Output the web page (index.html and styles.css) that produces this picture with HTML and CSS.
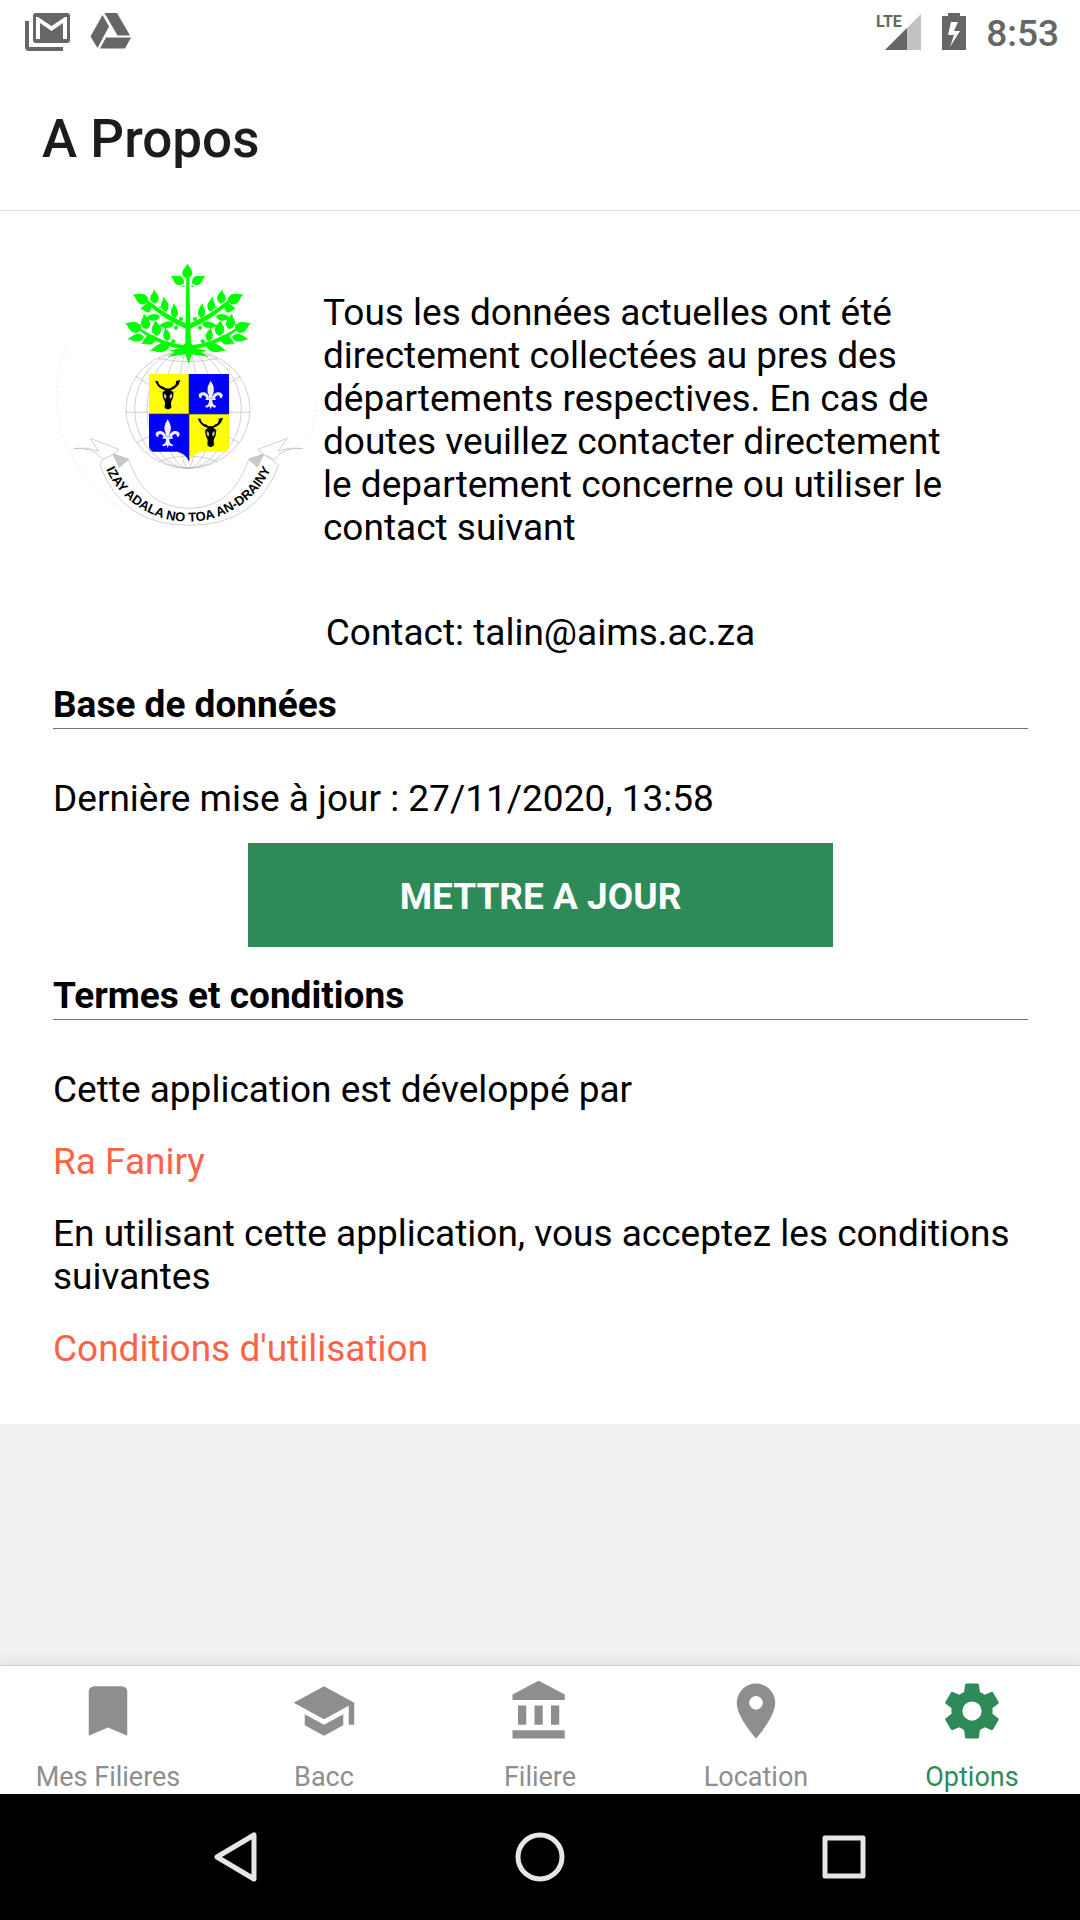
FILE: index.html
```html
<!DOCTYPE html>
<html lang="fr">
<head>
<meta charset="utf-8">
<meta name="viewport" content="width=device-width, initial-scale=1">
<title>A Propos</title>
<link rel="stylesheet" href="styles.css">
</head>
<body>
<div class="status">
  <div class="status-group">
    <svg width="46" height="40" viewBox="0 0 46 40" aria-hidden="true">
      <path fill="#666" d="M0 9h4v26h34v4H4q-4 0-4-4z"/>
      <path fill="#666" fill-rule="evenodd" d="M11 1h31q3 0 3 3v24q0 3-3 3H11q-3 0-3-3V4q0-3 3-3zM11 27h4V11l11.500 8L38 11v16h4V5h-2L26.500 14 13 5h-2z"/>
    </svg>
    <svg width="42" height="40" viewBox="0 0 42 40" aria-hidden="true">
      <path fill="#666" d="M14.500 1h12.500l13 22.500H27.500zM12.500 3l6.500 11.500L7.500 36 .5 24.500zM16 25.500h25L35 36.500H10z"/>
    </svg>
  </div>
  <div class="status-group status-right">
    <svg class="signal" width="46" height="50" viewBox="0 -6 46 50" aria-label="LTE">
      <path fill="#c2c2c2" d="M45 1v36H9z"/>
      <path fill="#666" d="M31 15v22H9z"/>
      <text class="lte" x="0" y="14">LTE</text>
    </svg>
    <svg width="24" height="38" viewBox="0 0 24 38" aria-hidden="true">
      <path fill="#666" fill-rule="evenodd" d="M6 0h12v3h6v34H0V3h6zM9 9L6 22h6L8 34l10-16h-6l4-9z"/>
    </svg>
    <time class="clock">8:53</time>
  </div>
</div>

<header class="header"><h1 class="title">A Propos</h1></header>

<main class="main">
  <div class="content">
    <div class="intro">
      <svg class="logo" viewBox="39 42 810 810" role="img" aria-label="Izay adala no toa an-drainy">
        <defs>
          <path id="leaf" d="M0 0C-20 -8 -19 -26 -5 -39L0 -50C4 -40 19 -27 14 -13Q10 -3 0 0Z"/>
          <path id="motto" d="M172 542A273 273 0 0 0 718 542"/>
          <g id="branch">
            <use href="#leaf" transform="translate(432 100) rotate(-61) scale(.9)"/>
            <use href="#leaf" transform="translate(324 156) rotate(-63) scale(1.02)"/>
            <use href="#leaf" transform="translate(345 161) rotate(-4) scale(.85)"/>
            <use href="#leaf" transform="translate(336 172) rotate(-98) scale(.88 .7)"/>
            <use href="#leaf" transform="translate(377 185) rotate(-8) scale(.75 .92)"/>
            <use href="#leaf" transform="translate(405 204) rotate(-5) scale(.7 .9)"/>
            <use href="#leaf" transform="translate(360 200) rotate(-96) scale(.65 .98)"/>
            <use href="#leaf" transform="translate(402 222) rotate(-97) scale(.65 .98)"/>
            <use href="#leaf" transform="translate(303 240) rotate(-67) scale(1.04)"/>
            <use href="#leaf" transform="translate(320 238) rotate(-10) scale(.9 .96)"/>
            <use href="#leaf" transform="translate(312 260) rotate(-99) scale(.75 1)"/>
            <use href="#leaf" transform="translate(352 257) rotate(-8) scale(.95)"/>
            <use href="#leaf" transform="translate(346 260) rotate(-118) scale(.95)"/>
            <use href="#leaf" transform="translate(384 273) rotate(-12) scale(.7 .85)"/>
            <use href="#leaf" transform="translate(388 288) rotate(-103) scale(.85 1.200)"/>
            <path d="M438 220Q380 195 326 152L320 158Q370 208 438 236zM440 286Q370 280 302 236L300 242Q370 296 440 296z"/>
            <circle cx="423" cy="207" r="6"/><circle cx="408" cy="233" r="6"/><circle cx="400" cy="274" r="6"/><circle cx="431" cy="109" r="3"/>
            <circle cx="320" cy="143" r="3"/><circle cx="360" cy="172" r="3"/><circle cx="300" cy="225" r="3"/>
          </g>
          <g id="lily" fill="#eee">
            <path d="M0 -44Q-16 -20 -6 -2L-5 8h10L6 -2Q16 -20 0 -44z"/>
            <path d="M-5 8C-6 -12 -34 -14 -36 0Q-36 9 -28 9Q-28 0 -22 0Q-14 2 -10 14zM5 8C6 -12 34 -14 36 0Q36 9 28 9Q28 0 22 0Q14 2 10 14z"/>
            <path d="M-15 9h30v5h-30zM-5 14Q-4 30 -17 32Q-12 42 -4 32L0 42L4 32Q12 42 17 32Q4 30 5 14z"/>
          </g>
          <g id="bull">
            <path d="M-8 -16Q-30 -20 -39 -45L-30 -43Q-28 -28 -12 -26Q-6 -20 0 -22Q6 -20 12 -26Q26 -30 24 -44L37 -47Q32 -24 8 -16L17 -10 15 6 9 20 10 36Q0 46 -10 36L-9 20 -15 6 -17 -10z"/>
            <path fill="#bbb" d="M-12 -6q6 0 8 10l-4 6q-6-6-4-16zM12 -6q-6 0-8 10l4 6q6-6 4-16z"/>
            <path fill="none" stroke="#bbb" stroke-width="3" d="M-26 -14L-15 -9M26 -14L15 -9"/>
          </g>
        </defs>
        <g fill="none" stroke="#b8b8b8" stroke-width="2">
          <path stroke="#ddd" stroke-dasharray="6 9" d="M80 290A387 387 0 0 0 240 770M812 560A387 387 0 0 0 826 440"/>
          <ellipse cx="444" cy="478" rx="186" ry="177"/>
          <ellipse cx="444" cy="478" rx="160" ry="177"/>
          <ellipse cx="444" cy="478" rx="123" ry="177"/>
          <ellipse cx="444" cy="478" rx="75" ry="177"/>
          <ellipse cx="444" cy="478" rx="28" ry="177"/>
          <path d="M258 487H630M286 378L330 406M602 378L558 406M290 578L335 555M598 578L553 555M355 325Q444 345 533 325M355 635Q444 600 533 635"/>
        </g>
        <g fill="#0f0">
          <path d="M439 82L436 280Q425 298 385 302L405 306 382 321 436 313 446 343 455 313 508 321 482 306 503 302Q463 298 453 280L447 82z"/>
          <use href="#leaf" transform="translate(442 86) scale(1 .9)"/>
          <use href="#branch"/>
          <use href="#branch" transform="translate(888 0) scale(-1 1)"/>
        </g>
        <clipPath id="shield"><path d="M327 372H567V588Q566 598 558 605H485Q454 612 447 635Q440 612 412 605H338Q328 600 327 588z"/></clipPath>
        <g clip-path="url(#shield)">
          <path fill="#ff0" d="M327 372h120v120H327zM447 492h120v145H447z"/>
          <path fill="#00f" d="M447 372h120v120H447zM327 492h120v145H327z"/>
          <path fill="none" stroke="#333" stroke-width="2" d="M327 492H567M447 372V635"/>
        </g>
        <use href="#bull" transform="translate(384 437)"/>
        <use href="#bull" transform="translate(512 550)"/>
        <use href="#lily" transform="translate(512 436)"/>
        <use href="#lily" transform="translate(383 552)"/>
        <g fill="#fff" stroke="#b8b8b8" stroke-width="2">
          <path d="M180 645L188 628 218 612 265 628Q315 775 447 775Q575 775 627 628L672 612 716 645Q650 826 447 826Q245 826 180 645z"/>
          <path fill="#c8c8c8" d="M218 612L266 628 238 652zM672 612L626 628 652 652z"/>
          <path d="M188 628Q160 590 102 596Q140 590 176 604L150 565 236 598 218 614zM704 628Q730 590 788 596Q750 590 714 604L742 565 654 598 672 614z"/>
        </g>
        <text class="motto"><textPath href="#motto" startOffset="50%">IZAY ADALA NO TOA AN-DRAINY</textPath></text>
      </svg>
      <p class="intro-text">Tous les données actuelles ont été directement collectées au pres des départements respectives. En cas de doutes veuillez contacter directement le departement concerne ou utiliser le contact suivant</p>
    </div>
    <p class="contact">Contact: talin@aims.ac.za</p>

    <section class="section">
      <h2 class="section-title">Base de données</h2>
      <p class="text">Dernière mise à jour : 27/11/2020, 13:58</p>
      <button class="update" type="button">METTRE A JOUR</button>
    </section>

    <section class="section">
      <h2 class="section-title">Termes et conditions</h2>
      <p class="text">Cette application est développé par</p>
      <a class="text link" href="#auteur">Ra Faniry</a>
      <p class="text">En utilisant cette application, vous acceptez les conditions suivantes</p>
      <a class="text link" href="#conditions">Conditions d'utilisation</a>
    </section>
  </div>
</main>

<nav class="tabs">
  <a class="tab" href="#filieres"><svg class="tab-icon" viewBox="0 0 24 24"><path d="M17 3H7a2 2 0 0 0-2 2v16l7-3 7 3V5a2 2 0 0 0-2-2z"/></svg>Mes Filieres</a>
  <a class="tab" href="#bacc"><svg class="tab-icon" viewBox="0 0 24 24"><path d="M12 3L1 9l11 6 9-4.910V17h2V9M5 13.180v4L12 21l7-3.820v-4L12 17l-7-3.820z"/></svg>Bacc</a>
  <a class="tab" href="#filiere"><svg class="tab-icon" viewBox="0 0 24 24"><path d="M11.500 1L2 6v2h19V6M16 10v7h3v-7M2 22h19v-3H2m8-9v7h3v-7m-9 0v7h3v-7H4z"/></svg>Filiere</a>
  <a class="tab" href="#location"><svg class="tab-icon" viewBox="0 0 24 24"><path d="M12 11.500A2.500 2.500 0 0 1 9.500 9 2.500 2.500 0 0 1 12 6.500 2.500 2.500 0 0 1 14.500 9a2.500 2.500 0 0 1-2.500 2.500M12 2a7 7 0 0 0-7 7c0 5.250 7 13 7 13s7-7.750 7-13a7 7 0 0 0-7-7z"/></svg>Location</a>
  <a class="tab active" href="#options" aria-current="page"><svg class="tab-icon" viewBox="0 0 24 24"><path d="M12 15.500A3.500 3.500 0 0 1 8.500 12 3.500 3.500 0 0 1 12 8.500a3.500 3.500 0 0 1 3.500 3.500 3.500 3.500 0 0 1-3.500 3.500m7.430-2.530c.04-.32.07-.64.07-.97 0-.33-.03-.66-.07-1l2.110-1.630c.19-.15.24-.42.12-.64l-2-3.460c-.12-.22-.39-.31-.61-.22l-2.490 1c-.52-.39-1.060-.73-1.690-.98l-.37-2.650A.506.506 0 0 0 14 2h-4c-.25 0-.46.18-.5.420l-.37 2.650c-.63.250-1.170.590-1.690.980l-2.490-1c-.22-.09-.49 0-.61.220l-2 3.460c-.13.220-.07.490.12.640L4.570 11c-.04.340-.07.670-.07 1 0 .330.03.650.07.970l-2.110 1.660c-.19.150-.25.420-.12.640l2 3.460c.12.220.39.300.61.220l2.490-1.010c.52.400 1.060.740 1.690.990l.37 2.650c.04.240.25.420.5.420h4c.25 0 .46-.18.5-.42l.37-2.650c.63-.26 1.170-.59 1.690-.99l2.490 1.010c.22.080.49 0 .61-.22l2-3.460c.12-.22.07-.49-.12-.64l-2.110-1.660z"/></svg>Options</a>
</nav>

<div class="system">
  <button class="system-button" type="button" aria-label="Retour"><svg class="system-icon" viewBox="0 0 54 54"><path d="M8 27L45 5V49z"/></svg></button>
  <button class="system-button" type="button" aria-label="Accueil"><svg class="system-icon" viewBox="0 0 54 54"><circle cx="27" cy="27" r="22"/></svg></button>
  <button class="system-button" type="button" aria-label="Applications"><svg class="system-icon" viewBox="0 0 54 54"><rect x="8" y="8" width="38" height="38"/></svg></button>
</div>
</body>
</html>
```
FILE: styles.css
```css
* { box-sizing: border-box; }

body {
  margin: 0;
  min-height: 100vh;
  display: flex;
  flex-direction: column;
  background: #fff;
  color: #000;
  font-family: Roboto, "Liberation Sans", sans-serif;
  font-size: 37px;
  line-height: 43px;
}

h1, h2, p { margin: 0; }
svg { display: block; flex: none; }

.status {
  display: flex;
  justify-content: space-between;
  align-items: center;
  height: 63px;
  padding: 0 21px 0 25px;
}
.status-group { display: flex; align-items: center; gap: 19px; }
.status-right { gap: 20px; }
.signal { overflow: visible; }
.clock { padding-top: 4px; color: #666; font-weight: 500; }
.lte { font-size: 16px; font-weight: 700; fill: #666; }

.header {
  height: 148px;
  padding: 45px 42px 0;
  border-bottom: 1px solid #ddd;
}
.title {
  color: #1c1c1e;
  font-size: 53px;
  font-weight: 500;
  line-height: 62px;
}

.main { flex: 1; background: #f1f1f1; }
.content {
  padding: 53px 52px 54px 53px;
  background: #fff;
}
.intro { display: flex; align-items: flex-start; }
.logo { width: 270px; height: 270px; }
.intro-text { flex: 1; padding: 27px 65px 0 0; }
.motto {
  font-family: "Liberation Sans", sans-serif;
  font-size: 39px;
  font-weight: 700;
  text-anchor: middle;
}
.contact { margin: 62px 0 2px; text-align: center; }

.section {
  display: flex;
  flex-direction: column;
  align-items: flex-start;
  padding-top: 27px;
}
.section-title {
  width: 100%;
  margin-bottom: 19px;
  padding-bottom: 2px;
  border-bottom: 1px solid #737373;
  font-size: 37px;
  font-weight: 700;
}
.text { margin-top: 29px; }
.link { color: #ff6347; text-decoration: none; }
.update {
  align-self: center;
  width: 60%;
  height: 104px;
  margin-top: 23px;
  padding: 3px 0 0;
  border: 0;
  background: #2e8b57;
  color: #fff;
  font: inherit;
  font-weight: 700;
}

.tabs {
  position: relative;
  display: grid;
  grid-template-columns: repeat(5, 1fr);
  height: 129px;
  padding-top: 12px;
  border-top: 1px solid #d0d0d0;
  background: #fff;
  box-shadow: 0 0 14px rgba(0, 0, 0, .1);
}
.tab {
  display: flex;
  flex-direction: column;
  align-items: center;
  gap: 16px;
  color: #8e8e8e;
  font-size: 27px;
  line-height: 34px;
  text-decoration: none;
}
.tab-icon { width: 66px; height: 66px; fill: currentColor; }
.active { color: #2e8b57; }

.system {
  position: relative;
  display: flex;
  justify-content: center;
  gap: 2px;
  height: 126px;
  background: #000;
}
.system-button {
  display: grid;
  place-items: center;
  width: 28%;
  padding: 0;
  border: 0;
  background: none;
}
.system-icon {
  width: 54px;
  height: 54px;
  fill: none;
  stroke: #e6e6e6;
  stroke-width: 5;
  stroke-linejoin: round;
}
```
